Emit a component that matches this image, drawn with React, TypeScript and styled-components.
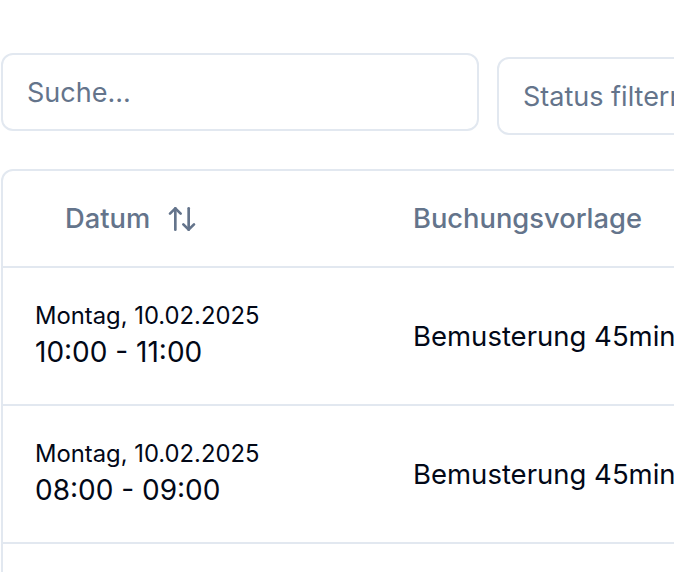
import React from "react";
import styled, { createGlobalStyle } from "styled-components";
import { ArrowUpDown } from "lucide-react";

const Global = createGlobalStyle`
  html, body { margin: 0; padding: 0; background: #ffffff; overflow: hidden; }
  body { font-family: Inter, "Noto Sans", sans-serif; color: #020817; }
  * { box-sizing: border-box; }
`;

const Page = styled.div`
  width: 1400px;
  padding: 53px 0 0 1px;
`;

const Toolbar = styled.div`
  display: flex;
  align-items: flex-start;
  gap: 18px;
`;

const SearchInput = styled.input`
  width: 478px;
  height: 78px;
  border: 2px solid #e2e8f0;
  border-radius: 12px;
  padding: 0 24px;
  font-family: inherit;
  font-size: 27px;
  color: #020817;
  background: #fff;
  outline: none;
  &::placeholder { color: #64748b; }
`;

const SelectTrigger = styled.button`
  margin-top: 4px;
  width: 360px;
  height: 78px;
  border: 2px solid #e2e8f0;
  border-radius: 12px;
  padding: 0 24px;
  background: #fff;
  font-family: inherit;
  font-size: 27px;
  color: #64748b;
  text-align: left;
  display: flex;
  align-items: center;
`;

const Card = styled.div`
  margin-top: 34px;
  width: 1000px;
  border: 2px solid #e2e8f0;
  border-radius: 12px;
  overflow: hidden;
`;

const Table = styled.table`
  border-collapse: collapse;
  width: 100%;
`;

const HeadRow = styled.tr`
  height: 96px;
  border-bottom: 2px solid #e2e8f0;
`;

const Th = styled.th<{ $w?: number }>`
  text-align: left;
  padding: 0 32px;
  font-size: 27.3px;
  font-weight: 500;
  color: #64748b;
  width: ${(p) => (p.$w ? `${p.$w}px` : "auto")};
  vertical-align: middle;
`;

const SortButton = styled.button`
  display: inline-flex;
  align-items: center;
  gap: 16px;
  height: 72px;
  margin-left: -2px;
  padding: 0 32px;
  border: none;
  background: transparent;
  font-family: inherit;
  font-size: 27.3px;
  font-weight: 500;
  color: #64748b;
`;

const Row = styled.tr`
  height: 138px;
  border-bottom: 2px solid #e2e8f0;
`;

const Td = styled.td`
  padding: 0 32px;
  vertical-align: middle;
  font-size: 27.5px;
  color: #020817;
`;

const DateLine = styled.div`
  font-size: 23.8px;
  line-height: 32px;
`;

const TimeLine = styled.div`
  font-size: 28px;
  line-height: 40px;
`;

const rows = [
  { date: "Montag, 10.02.2025", time: "10:00 - 11:00", tpl: "Bemusterung 45min" },
  { date: "Montag, 10.02.2025", time: "08:00 - 09:00", tpl: "Bemusterung 45min" },
  { date: "Montag, 10.02.2025", time: "07:00 - 08:00", tpl: "Bemusterung 45min" },
];

export default function App() {
  return (
    <>
      <Global />
      <Page>
        <Toolbar>
          <SearchInput placeholder="Suche..." />
          <SelectTrigger>Status filtern</SelectTrigger>
        </Toolbar>
        <Card>
          <Table>
            <thead>
              <HeadRow>
                <Th $w={378}>
                  <SortButton>
                    Datum
                    <ArrowUpDown size={32} strokeWidth={2} />
                  </SortButton>
                </Th>
                <Th>Buchungsvorlage</Th>
              </HeadRow>
            </thead>
            <tbody>
              {rows.map((r, i) => (
                <Row key={i}>
                  <Td>
                    <DateLine>{r.date}</DateLine>
                    <TimeLine>{r.time}</TimeLine>
                  </Td>
                  <Td>{r.tpl}</Td>
                </Row>
              ))}
            </tbody>
          </Table>
        </Card>
      </Page>
    </>
  );
}
